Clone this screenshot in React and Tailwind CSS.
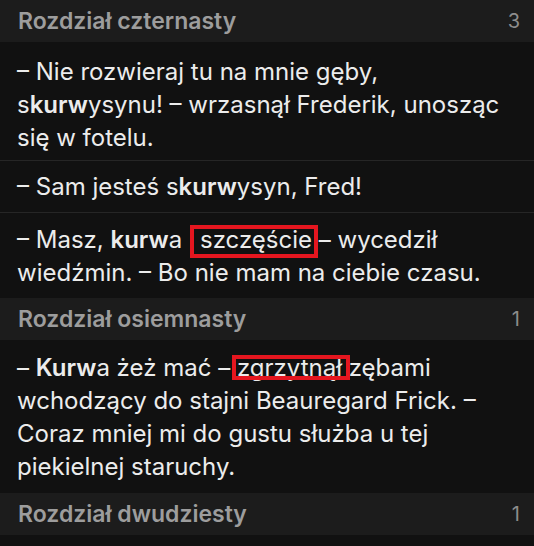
import React from 'react';

function Header({ title, count }) {
    return (
        <div className="h-[42px] bg-[#1c1c1c] flex items-center justify-between pl-[18px] pr-[14px]">
            <span className="text-[23px] font-semibold text-[#9d9d9d] leading-none">{title}</span>
            <span className="text-[20px] text-[#8c8c8c] leading-none">{count}</span>
        </div>
    );
}

function Marked({ children, box }) {
    return (
        <span className="relative">
            {children}
            <span className={`absolute border-4 border-[#e5161f] pointer-events-none ${box}`}></span>
        </span>
    );
}

export default function App() {
    return (
        <div className="w-[534px] h-[546px] bg-[#111111] overflow-hidden" style={{ fontFamily: 'Inter, "Noto Sans", sans-serif' }}>
            <Header title="Rozdział czternasty" count="3" />

            <div className="px-[17px] pt-[13px] pb-[6px] text-[24px] leading-[33px] text-[#ececec] border-b border-[#262626]">
                – Nie rozwieraj tu na mnie gęby, s<b className="font-semibold">kurw</b>ysynu! – wrzasnął Frederik, unosząc się w fotelu.
            </div>
            <div className="px-[17px] pt-[9px] pb-[9px] text-[24px] leading-[33px] text-[#ececec] border-b border-[#262626]">
                – Sam jesteś s<b className="font-semibold">kurw</b>ysyn, Fred!
            </div>
            <div className="px-[17px] pt-[10px] pb-[9px] text-[24px] leading-[33px] text-[#ececec]">
                – Masz, <b className="font-semibold">kurw</b>a{' '}
                <span className="ml-[11px]">
                    <Marked box="-left-[10px] -right-[6px] top-0 -bottom-[4px]">szczęście</Marked>
                </span>{' '}
                – wycedził wiedźmin. – Bo nie mam na ciebie czasu.
            </div>

            <Header title="Rozdział osiemnasty" count="1" />

            <div className="px-[17px] pt-[11px] pb-[10px] text-[24px] leading-[33px] text-[#ececec]">
                – <b className="font-semibold">Kurw</b>a żeż mać –{' '}
                <Marked box="-left-[5px] -right-[8px] top-[2px] bottom-[2px]">zgrzytnął</Marked>{' '}
                zębami wchodzący do stajni Beauregard Frick. – Coraz mniej mi do gustu służba u tej piekielnej staruchy.
            </div>

            <Header title="Rozdział dwudziesty" count="1" />
        </div>
    );
}
